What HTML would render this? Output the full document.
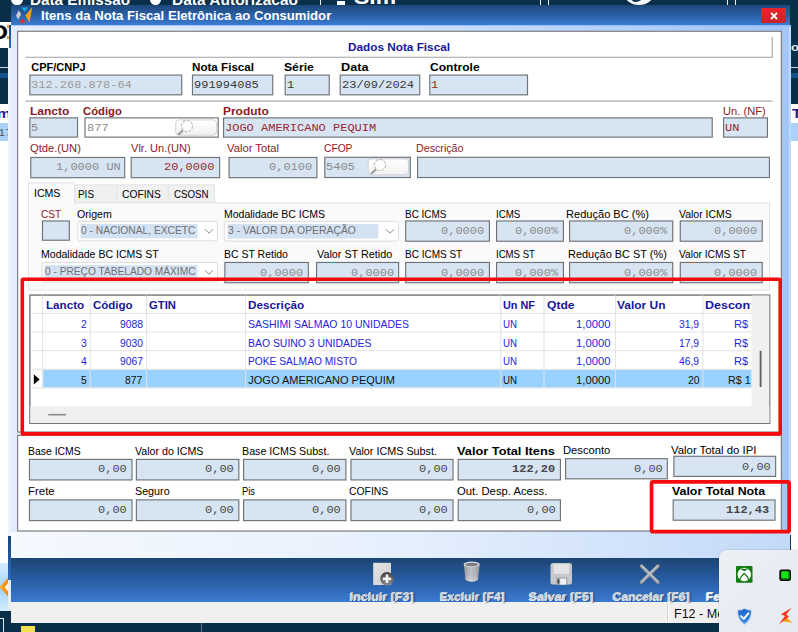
<!DOCTYPE html>
<html><head><meta charset="utf-8"><title>Itens da Nota Fiscal</title>
<style>
html,body{margin:0;padding:0;}
body{width:798px;height:632px;overflow:hidden;background:#fff;position:relative;font-family:"Liberation Sans",sans-serif;}
#root{position:absolute;left:0;top:0;width:798px;height:632px;overflow:hidden;background:#fff;}
#root div{white-space:pre;}
#root svg{display:block;overflow:visible;}
</style></head><body><div id="root">
<div style="position:absolute;left:0.00px;top:0.00px;width:798.00px;height:8.00px;background:#0a2f4b"></div>
<div style="position:absolute;left:0;top:0;width:798px;height:6px;overflow:hidden">
<div style="position:absolute;left:30.00px;top:-10.45px;font:bold 15px/19px 'Liberation Sans',sans-serif;color:#fff;white-space:pre;transform:scaleX(1.0165);transform-origin:0 0;">Data Emissão</div>
<div style="position:absolute;left:172.00px;top:-10.45px;font:bold 15px/19px 'Liberation Sans',sans-serif;color:#fff;white-space:pre;transform:scaleX(1.0330);transform-origin:0 0;">Data Autorização</div>
<div style="position:absolute;left:354.00px;top:-15.53px;font:bold 21px/25px 'Liberation Sans',sans-serif;color:#fff;white-space:pre;transform:scaleX(1.0905);transform-origin:0 0;">Sim</div>
<div style="position:absolute;left:11.00px;top:-6.50px;width:11.50px;height:11.50px;background:#fff;border-radius:6px"></div>
<div style="position:absolute;left:149.50px;top:-6.50px;width:11.50px;height:11.50px;background:#fff;border-radius:6px"></div>
<div style="position:absolute;left:337.00px;top:1.00px;width:8.00px;height:5.00px;background:#fff"></div>
<div style="position:absolute;left:320.00px;top:0.00px;width:1.00px;height:6.00px;background:#e8eef4"></div>
<div style="position:absolute;left:540.00px;top:0.00px;width:1.00px;height:6.00px;background:#e8eef4"></div>
<div style="position:absolute;left:548.00px;top:0.00px;width:1.00px;height:6.00px;background:#e8eef4"></div>
<div style="position:absolute;left:727.00px;top:0.00px;width:1.00px;height:6.00px;background:#e8eef4"></div>
<div style="position:absolute;left:735.00px;top:0.00px;width:1.00px;height:6.00px;background:#e8eef4"></div>
<div style="position:absolute;left:624.00px;top:-10.00px;width:30.00px;height:14.50px;background:#f4f6f8;border-radius:0 0 15px 15px/0 0 12px 12px"></div>
<div style="position:absolute;left:631.00px;top:-8.00px;width:14.00px;height:9.60px;background:#0a2f4b;border-radius:0 0 8px 6px/0 0 8px 7px;transform:skewX(-18deg)"></div>
</div>
<div style="position:absolute;left:0.00px;top:0.00px;width:11.00px;height:22.00px;background:#0a2f4b"></div>
<div style="position:absolute;left:0.00px;top:22.00px;width:8.50px;height:25.50px;background:#fff"></div>
<div style="position:absolute;left:-10.00px;top:19.47px;font:bold 21px/25px 'Liberation Sans',sans-serif;color:#000;white-space:pre;transform:scaleX(1.1900);transform-origin:0 0;">D</div>
<div style="position:absolute;left:7.00px;top:25.00px;width:1.50px;height:2.50px;background:#f0a040"></div>
<div style="position:absolute;left:7.00px;top:36.00px;width:1.50px;height:3.00px;background:#f0a040"></div>
<div style="position:absolute;left:8.50px;top:25.00px;width:2.50px;height:22.50px;background:linear-gradient(#1d4a7c,#2d6bc0)"></div>
<div style="position:absolute;left:0.00px;top:47.50px;width:8.00px;height:56.30px;background:#0a2f4b"></div>
<div style="position:absolute;left:0.00px;top:67.00px;width:8.00px;height:1.00px;background:#c8d4e0"></div>
<div style="position:absolute;left:0.00px;top:73.00px;width:8.00px;height:4.50px;background:#15538f"></div>
<div style="position:absolute;left:0.00px;top:103.80px;width:8.00px;height:459.20px;background:#fff"></div>
<div style="position:absolute;left:-3.50px;top:105.24px;font:bold 13px/17px 'Liberation Sans',sans-serif;color:#2a1a9a;white-space:pre;transform:scaleX(1.1900);transform-origin:0 0;">m</div>
<div style="position:absolute;left:0.00px;top:123.00px;width:8.00px;height:17.70px;background:#a9d3fb"></div>
<div style="position:absolute;left:-2.50px;top:125.82px;font:11px/15px 'Liberation Mono',monospace;color:#555;white-space:pre;transform:scaleX(1.0900);transform-origin:0 0;">17</div>
<div style="position:absolute;left:0.00px;top:562.60px;width:8.30px;height:48.00px;background:linear-gradient(#d4ecff,#a6d5fb 55%,#d3ecfe)"></div>
<svg style="position:absolute;left:0;top:576px" width="9" height="22" viewBox="0 576 9 22"><defs><linearGradient id="go" x1="0" y1="0" x2="1" y2="0"><stop offset="0" stop-color="#ffab1f"/><stop offset="1" stop-color="#f7861a"/></linearGradient></defs><path d="M-0.5 587.2 L8.3 577.4 L8.3 596.8 Z" fill="url(#go)"/><path d="M4.8 587.2 L8.4 582.4 L8.4 592 Z" fill="#fdf6ea"/></svg>
<div style="position:absolute;left:0.00px;top:610.50px;width:11.00px;height:22.00px;background:#0a2f4b"></div>
<div style="position:absolute;left:8.00px;top:47.50px;width:3.00px;height:490.00px;background:#eef4fd"></div>
<div style="position:absolute;left:8.30px;top:536.00px;width:2.70px;height:44.00px;background:linear-gradient(#1b4679,#2c68bb)"></div>
<div style="position:absolute;left:8.30px;top:580.00px;width:2.70px;height:30.50px;background:#e9eef5"></div>
<div style="position:absolute;left:790.00px;top:0.00px;width:8.00px;height:104.00px;background:#0a2f4b"></div>
<div style="position:absolute;left:791.30px;top:39.94px;font:bold 11px/15px 'Liberation Sans',sans-serif;color:#dfe6ee;white-space:pre;transform:scaleX(1.1900);transform-origin:0 0;">o</div>
<div style="position:absolute;left:791.00px;top:67.00px;width:7.00px;height:1.00px;background:#c8d4e0"></div>
<div style="position:absolute;left:791.00px;top:73.00px;width:7.00px;height:4.50px;background:#15538f"></div>
<div style="position:absolute;left:791.00px;top:104.00px;width:7.00px;height:19.00px;background:#fff"></div>
<div style="position:absolute;left:792.00px;top:105.24px;font:bold 13px/17px 'Liberation Sans',sans-serif;color:#1a1a8a;white-space:pre;transform:scaleX(1.1900);transform-origin:0 0;">T</div>
<div style="position:absolute;left:791.00px;top:123.00px;width:7.00px;height:18.00px;background:#a9d3fb"></div>
<div style="position:absolute;left:791.00px;top:141.00px;width:7.00px;height:420.00px;background:#fff"></div>
<div style="position:absolute;left:0.00px;top:622.00px;width:798.00px;height:10.00px;background:#0a2f4b"></div>
<div style="position:absolute;left:21.00px;top:626.00px;width:14.00px;height:8.00px;background:#f5e050"></div>
<div style="position:absolute;left:0.00px;top:618.00px;width:4.00px;height:1.00px;background:#dfe6ee"></div>
<div style="position:absolute;left:3.00px;top:618.00px;width:1.00px;height:14.00px;background:#dfe6ee"></div>
<div style="position:absolute;left:201.00px;top:622.50px;width:1.00px;height:10.00px;background:#5f7388"></div>
<div style="position:absolute;left:11.00px;top:5.10px;width:779.40px;height:20.20px;background:linear-gradient(#1d4879,#2b61a9 55%,#3b7cd5)"></div>
<div style="position:absolute;left:11.00px;top:25.20px;width:780.00px;height:533.00px;background:linear-gradient(90deg,#e2ecfc,#cde0fb 50%,#9fc4f8)"></div>
<div style="position:absolute;left:11.00px;top:25.20px;width:780.00px;height:1.00px;background:linear-gradient(90deg,#a9c9f6,#8fb8f2)"></div>
<div style="position:absolute;left:782.00px;top:27.00px;width:9.00px;height:505.00px;background:linear-gradient(90deg,#a2c6f8 0,#a2c6f8 70%,#c2d9fa 84%)"></div>
<div style="position:absolute;left:11.00px;top:531.50px;width:780.00px;height:26.50px;background:linear-gradient(90deg,#f6f9fe,#e6f0fd 50%,#c3d9f8)"></div>
<svg style="position:absolute;left:14px;top:6px" width="22" height="19" viewBox="14 6 22 19"><path d="M16 15.5 L18.8 10.2 L21.2 14.2 L18 19.6 Z" fill="#c9cdd3"/><path d="M21.4 7.6 L28.2 7.6 L24.8 11.8 Z" fill="#19a8e8"/><path d="M19.2 22.8 L25.6 22.8 L22.4 18.2 Z" fill="#ee2a22"/><path d="M32.3 7 L25.3 15.6 L29.5 22.6 Z" fill="#f2a01c"/></svg>
<div style="position:absolute;left:40.60px;top:7.58px;font:bold 12.6px/16.6px 'Liberation Sans',sans-serif;color:#fff;white-space:pre;transform:scaleX(1.0421);transform-origin:0 0;">Itens da Nota Fiscal Eletrônica ao Consumidor</div>
<div style="position:absolute;left:760.90px;top:8.00px;width:24.90px;height:15.40px;background:linear-gradient(#ea2329,#d9242a 50%,#c4252b);"></div>
<svg style="position:absolute;left:768px;top:11px" width="12" height="10" viewBox="768 11 12 10"><path d="M771 12.9 L777 19 M777 12.9 L771 19" stroke="#fff" stroke-width="2" fill="none"/></svg>
<svg style="position:absolute;left:16px;top:29px;" width="767" height="405" viewBox="16 29 767 405"><rect x="17.60" y="31.30" width="763.80" height="400.70" rx="0" fill="#fff" stroke="#828282" stroke-width="1.2" /></svg>
<svg style="position:absolute;left:16px;top:433px;" width="767" height="100" viewBox="16 433 767 100"><rect x="17.60" y="435.30" width="763.80" height="95.70" rx="0" fill="#fff" stroke="#828282" stroke-width="1.2" /></svg>
<svg style="position:absolute;left:24px;top:55px;" width="750" height="5" viewBox="24 55 750 5"><line x1="25.50" y1="57.20" x2="772.50" y2="57.20" stroke="#a2a2a2" stroke-width="1.1"/></svg>
<svg style="position:absolute;left:770px;top:36px;" width="5" height="23" viewBox="770 36 5 23"><line x1="772.20" y1="37.00" x2="772.20" y2="57.50" stroke="#a2a2a2" stroke-width="1.1"/></svg>
<div style="position:absolute;left:348.10px;top:39.94px;font:bold 11px/15px 'Liberation Sans',sans-serif;color:#17179a;white-space:pre;transform:scaleX(1.0697);transform-origin:0 0;">Dados Nota Fiscal</div>
<div style="position:absolute;left:31.30px;top:59.94px;font:bold 11px/15px 'Liberation Sans',sans-serif;color:#000;white-space:pre;">CPF/CNPJ</div>
<div style="position:absolute;left:192.30px;top:59.94px;font:bold 11px/15px 'Liberation Sans',sans-serif;color:#000;white-space:pre;transform:scaleX(1.0565);transform-origin:0 0;">Nota Fiscal</div>
<div style="position:absolute;left:284.30px;top:59.94px;font:bold 11px/15px 'Liberation Sans',sans-serif;color:#000;white-space:pre;transform:scaleX(1.1074);transform-origin:0 0;">Série</div>
<div style="position:absolute;left:340.60px;top:59.94px;font:bold 11px/15px 'Liberation Sans',sans-serif;color:#000;white-space:pre;transform:scaleX(1.1534);transform-origin:0 0;">Data</div>
<div style="position:absolute;left:430.10px;top:59.94px;font:bold 11px/15px 'Liberation Sans',sans-serif;color:#000;white-space:pre;transform:scaleX(1.0969);transform-origin:0 0;">Controle</div>
<svg style="position:absolute;left:28px;top:73px;" width="156" height="24" viewBox="28 73 156 24"><rect x="29.88" y="75.08" width="151.85" height="19.75" rx="0" fill="#d7e4f2" stroke="#6f7378" stroke-width="1.15" /></svg>
<div style="position:absolute;left:31.40px;top:77.82px;font:11px/15px 'Liberation Mono',monospace;color:#9a9a9a;white-space:pre;transform:scaleX(1.0909);transform-origin:0 0;">312.268.878-64</div>
<svg style="position:absolute;left:190px;top:73px;" width="85" height="24" viewBox="190 73 85 24"><rect x="192.47" y="75.08" width="80.25" height="19.75" rx="0" fill="#d7e4f2" stroke="#6f7378" stroke-width="1.15" /></svg>
<div style="position:absolute;left:193.80px;top:77.82px;font:11px/15px 'Liberation Mono',monospace;color:#383838;white-space:pre;transform:scaleX(1.0909);transform-origin:0 0;">991994085</div>
<svg style="position:absolute;left:283px;top:73px;" width="48" height="24" viewBox="283 73 48 24"><rect x="285.18" y="75.08" width="44.05" height="19.75" rx="0" fill="#d7e4f2" stroke="#6f7378" stroke-width="1.15" /></svg>
<div style="position:absolute;left:286.60px;top:77.82px;font:11px/15px 'Liberation Mono',monospace;color:#383838;white-space:pre;transform:scaleX(1.0909);transform-origin:0 0;">1</div>
<svg style="position:absolute;left:338px;top:73px;" width="84" height="24" viewBox="338 73 84 24"><rect x="340.18" y="75.08" width="79.55" height="19.75" rx="0" fill="#d7e4f2" stroke="#6f7378" stroke-width="1.15" /></svg>
<div style="position:absolute;left:341.80px;top:77.82px;font:11px/15px 'Liberation Mono',monospace;color:#383838;white-space:pre;transform:scaleX(1.0909);transform-origin:0 0;">23/09/2024</div>
<svg style="position:absolute;left:428px;top:73px;" width="102" height="24" viewBox="428 73 102 24"><rect x="429.77" y="75.08" width="97.75" height="19.75" rx="0" fill="#d7e4f2" stroke="#6f7378" stroke-width="1.15" /></svg>
<div style="position:absolute;left:431.30px;top:77.82px;font:11px/15px 'Liberation Mono',monospace;color:#982834;white-space:pre;transform:scaleX(1.0909);transform-origin:0 0;">1</div>
<svg style="position:absolute;left:24px;top:98px;" width="750" height="6" viewBox="24 98 750 6"><line x1="25.50" y1="101.10" x2="772.50" y2="101.10" stroke="#a8a8a8" stroke-width="1.2"/></svg>
<div style="position:absolute;left:29.90px;top:103.94px;font:bold 11px/15px 'Liberation Sans',sans-serif;color:#8a1a24;white-space:pre;transform:scaleX(1.0927);transform-origin:0 0;">Lancto</div>
<div style="position:absolute;left:83.30px;top:103.94px;font:bold 11px/15px 'Liberation Sans',sans-serif;color:#8a1a24;white-space:pre;transform:scaleX(1.0244);transform-origin:0 0;">Código</div>
<div style="position:absolute;left:223.30px;top:103.94px;font:bold 11px/15px 'Liberation Sans',sans-serif;color:#8a1a24;white-space:pre;transform:scaleX(1.0864);transform-origin:0 0;">Produto</div>
<div style="position:absolute;left:722.90px;top:103.94px;font:11px/15px 'Liberation Sans',sans-serif;color:#8a1a24;white-space:pre;transform:scaleX(1.0127);transform-origin:0 0;">Un. (NF)</div>
<svg style="position:absolute;left:28px;top:116px;" width="52" height="23" viewBox="28 116 52 23"><rect x="29.88" y="117.88" width="47.65" height="19.25" rx="0" fill="#d7e4f2" stroke="#6f7378" stroke-width="1.15" /></svg>
<div style="position:absolute;left:31.40px;top:120.82px;font:11px/15px 'Liberation Mono',monospace;color:#8c8c8c;white-space:pre;transform:scaleX(1.0909);transform-origin:0 0;">5</div>
<svg style="position:absolute;left:83px;top:116px;" width="137" height="23" viewBox="83 116 137 23"><rect x="84.98" y="117.88" width="133.25" height="19.25" rx="0" fill="#fff" stroke="#6f7378" stroke-width="1.15" /></svg>
<div style="position:absolute;left:86.50px;top:120.82px;font:11px/15px 'Liberation Mono',monospace;color:#8c8c8c;white-space:pre;transform:scaleX(1.0909);transform-origin:0 0;">877</div>
<svg style="position:absolute;left:174px;top:118px;" width="44" height="19" viewBox="174 118 44 19"><defs><linearGradient id="gb175" x1="0" y1="0" x2="0" y2="1"><stop offset="0" stop-color="#fff"/><stop offset="1" stop-color="#f1f1f1"/></linearGradient></defs><rect x="175.70" y="119.90" width="40.80" height="15.30" rx="3.2" fill="url(#gb175)" stroke="#d4d4d4" stroke-width="1"/></svg>
<svg style="position:absolute;left:175.20px;top:118.00px" width="24" height="20" viewBox="-12 -8 24 20"><circle cx="0" cy="0" r="5.6" fill="#fdfdfd" stroke="#bdbdbd" stroke-width="1.1" stroke-dasharray="3 1.2"/><line x1="-4" y1="4.4" x2="-9" y2="8.8" stroke="#a2a2a2" stroke-width="2.4"/></svg>
<svg style="position:absolute;left:222px;top:116px;" width="492" height="23" viewBox="222 116 492 23"><rect x="223.57" y="117.88" width="488.65" height="19.25" rx="0" fill="#d7e4f2" stroke="#6f7378" stroke-width="1.15" /></svg>
<div style="position:absolute;left:224.50px;top:120.82px;font:11px/15px 'Liberation Mono',monospace;color:#982834;white-space:pre;transform:scaleX(1.0909);transform-origin:0 0;">JOGO AMERICANO PEQUIM</div>
<svg style="position:absolute;left:722px;top:116px;" width="47" height="23" viewBox="722 116 47 23"><rect x="723.58" y="117.88" width="43.85" height="19.25" rx="0" fill="#d7e4f2" stroke="#6f7378" stroke-width="1.15" /></svg>
<div style="position:absolute;left:724.80px;top:120.82px;font:11px/15px 'Liberation Mono',monospace;color:#982834;white-space:pre;transform:scaleX(1.0909);transform-origin:0 0;">UN</div>
<div style="position:absolute;left:29.90px;top:140.94px;font:11px/15px 'Liberation Sans',sans-serif;color:#8a1a24;white-space:pre;transform:scaleX(1.0156);transform-origin:0 0;">Qtde.(UN)</div>
<div style="position:absolute;left:131.30px;top:140.94px;font:11px/15px 'Liberation Sans',sans-serif;color:#8a1a24;white-space:pre;transform:scaleX(1.0071);transform-origin:0 0;">Vlr. Un.(UN)</div>
<div style="position:absolute;left:227.30px;top:140.94px;font:11px/15px 'Liberation Sans',sans-serif;color:#8a1a24;white-space:pre;transform:scaleX(1.0205);transform-origin:0 0;">Valor Total</div>
<div style="position:absolute;left:323.90px;top:140.94px;font:11px/15px 'Liberation Sans',sans-serif;color:#8a1a24;white-space:pre;transform:scaleX(0.9294);transform-origin:0 0;">CFOP</div>
<div style="position:absolute;left:415.80px;top:140.94px;font:11px/15px 'Liberation Sans',sans-serif;color:#8a1a24;white-space:pre;transform:scaleX(0.9713);transform-origin:0 0;">Descrição</div>
<svg style="position:absolute;left:29px;top:155px;" width="98" height="25" viewBox="29 155 98 25"><rect x="30.77" y="157.47" width="93.95" height="20.25" rx="0" fill="#d7e4f2" stroke="#6f7378" stroke-width="1.15" /></svg>
<div style="position:absolute;left:55.99px;top:159.82px;font:11px/15px 'Liberation Mono',monospace;color:#8c8c8c;white-space:pre;transform:scaleX(1.0909);transform-origin:0 0;">1,0000 UN</div>
<svg style="position:absolute;left:129px;top:155px;" width="93" height="25" viewBox="129 155 93 25"><rect x="131.17" y="157.47" width="88.45" height="20.25" rx="0" fill="#d7e4f2" stroke="#6f7378" stroke-width="1.15" /></svg>
<div style="position:absolute;left:164.09px;top:159.82px;font:11px/15px 'Liberation Mono',monospace;color:#982834;white-space:pre;transform:scaleX(1.0909);transform-origin:0 0;">20,0000</div>
<svg style="position:absolute;left:227px;top:155px;" width="92" height="25" viewBox="227 155 92 25"><rect x="229.07" y="157.47" width="87.85" height="20.25" rx="0" fill="#d7e4f2" stroke="#6f7378" stroke-width="1.15" /></svg>
<div style="position:absolute;left:268.89px;top:159.82px;font:11px/15px 'Liberation Mono',monospace;color:#8c8c8c;white-space:pre;transform:scaleX(1.0909);transform-origin:0 0;">0,0100</div>
<svg style="position:absolute;left:323px;top:155px;" width="89" height="25" viewBox="323 155 89 25"><rect x="324.77" y="157.28" width="85.55" height="20.25" rx="0" fill="#d7e4f2" stroke="#6f7378" stroke-width="1.15" /></svg>
<div style="position:absolute;left:325.80px;top:159.82px;font:11px/15px 'Liberation Mono',monospace;color:#8c8c8c;white-space:pre;transform:scaleX(1.0909);transform-origin:0 0;">5405</div>
<svg style="position:absolute;left:366px;top:157px;" width="44" height="20" viewBox="366 157 44 20"><defs><linearGradient id="gb367" x1="0" y1="0" x2="0" y2="1"><stop offset="0" stop-color="#fff"/><stop offset="1" stop-color="#f1f1f1"/></linearGradient></defs><rect x="368.20" y="158.90" width="40.30" height="15.90" rx="3.2" fill="url(#gb367)" stroke="#d4d4d4" stroke-width="1"/></svg>
<svg style="position:absolute;left:367.70px;top:157.00px" width="24" height="20" viewBox="-12 -8 24 20"><circle cx="0" cy="0" r="5.6" fill="#fdfdfd" stroke="#bdbdbd" stroke-width="1.1" stroke-dasharray="3 1.2"/><line x1="-4" y1="4.4" x2="-9" y2="8.8" stroke="#a2a2a2" stroke-width="2.4"/></svg>
<svg style="position:absolute;left:416px;top:155px;" width="355" height="25" viewBox="416 155 355 25"><rect x="417.57" y="157.28" width="351.85" height="20.25" rx="0" fill="#d7e4f2" stroke="#6f7378" stroke-width="1.15" /></svg>
<svg style="position:absolute;left:27px;top:201px;" width="744" height="91" viewBox="27 201 744 91"><rect x="28.50" y="202.80" width="741.00" height="87.20" rx="0" fill="#fafafa" stroke="#e4e4e4" stroke-width="1" /></svg>
<svg style="position:absolute;left:73px;top:183px;" width="45" height="21" viewBox="73 183 45 21"><rect x="75.20" y="184.80" width="41.10" height="17.70" rx="0" fill="#f0f0f0" stroke="#e4e4e4" stroke-width="1" /></svg>
<svg style="position:absolute;left:115px;top:183px;" width="55" height="21" viewBox="115 183 55 21"><rect x="116.80" y="184.80" width="51.40" height="17.70" rx="0" fill="#f0f0f0" stroke="#e4e4e4" stroke-width="1" /></svg>
<svg style="position:absolute;left:167px;top:183px;" width="49" height="21" viewBox="167 183 49 21"><rect x="168.70" y="184.80" width="45.80" height="17.70" rx="0" fill="#f0f0f0" stroke="#e4e4e4" stroke-width="1" /></svg>
<svg style="position:absolute;left:27px;top:181px;" width="49" height="25" viewBox="27 181 49 25"><rect x="28.50" y="182.80" width="46.00" height="21.70" rx="0" fill="#fafafa" stroke="#e4e4e4" stroke-width="1" /></svg>
<div style="position:absolute;left:29.00px;top:202.00px;width:45.20px;height:4.00px;background:#fafafa"></div>
<div style="position:absolute;left:34.30px;top:185.94px;font:11px/15px 'Liberation Sans',sans-serif;color:#000;white-space:pre;transform:scaleX(0.9600);transform-origin:0 0;">ICMS</div>
<div style="position:absolute;left:78.30px;top:186.94px;font:11px/15px 'Liberation Sans',sans-serif;color:#000;white-space:pre;transform:scaleX(0.9024);transform-origin:0 0;">PIS</div>
<div style="position:absolute;left:122.10px;top:186.94px;font:11px/15px 'Liberation Sans',sans-serif;color:#000;white-space:pre;transform:scaleX(0.9337);transform-origin:0 0;">COFINS</div>
<div style="position:absolute;left:174.30px;top:186.94px;font:11px/15px 'Liberation Sans',sans-serif;color:#000;white-space:pre;transform:scaleX(0.8819);transform-origin:0 0;">CSOSN</div>
<div style="position:absolute;left:40.60px;top:206.94px;font:11px/15px 'Liberation Sans',sans-serif;color:#8a1a24;white-space:pre;transform:scaleX(0.9136);transform-origin:0 0;">CST</div>
<div style="position:absolute;left:77.30px;top:206.94px;font:11px/15px 'Liberation Sans',sans-serif;color:#000;white-space:pre;transform:scaleX(0.9650);transform-origin:0 0;">Origem</div>
<div style="position:absolute;left:223.60px;top:206.94px;font:11px/15px 'Liberation Sans',sans-serif;color:#000;white-space:pre;transform:scaleX(0.9549);transform-origin:0 0;">Modalidade BC ICMS</div>
<div style="position:absolute;left:404.80px;top:206.94px;font:11px/15px 'Liberation Sans',sans-serif;color:#000;white-space:pre;transform:scaleX(0.9054);transform-origin:0 0;">BC ICMS</div>
<div style="position:absolute;left:495.80px;top:206.94px;font:11px/15px 'Liberation Sans',sans-serif;color:#000;white-space:pre;transform:scaleX(0.8836);transform-origin:0 0;">ICMS</div>
<div style="position:absolute;left:566.00px;top:206.94px;font:11px/15px 'Liberation Sans',sans-serif;color:#000;white-space:pre;transform:scaleX(1.0057);transform-origin:0 0;">Redução BC (%)</div>
<div style="position:absolute;left:679.00px;top:206.94px;font:11px/15px 'Liberation Sans',sans-serif;color:#000;white-space:pre;transform:scaleX(0.9509);transform-origin:0 0;">Valor ICMS</div>
<svg style="position:absolute;left:40px;top:219px;" width="31" height="23" viewBox="40 219 31 23"><rect x="42.48" y="220.97" width="26.85" height="19.25" rx="0" fill="#d7e4f2" stroke="#6f7378" stroke-width="1.15" /></svg>
<svg style="position:absolute;left:76px;top:219px;" width="143" height="24" viewBox="76 219 143 24"><rect x="78.00" y="221.40" width="139.50" height="19.40" rx="2" fill="#fff" stroke="#dcdcdc" stroke-width="1" /></svg>
<svg style="position:absolute;left:79px;top:222px;" width="120" height="18" viewBox="79 222 120 18"><rect x="80.50" y="223.90" width="117.00" height="14.40" rx="0" fill="#d3e2f3" /></svg>
<div style="position:absolute;left:81.30px;top:222.94px;font:11px/15px 'Liberation Sans',sans-serif;color:#6f6f6f;white-space:pre;transform:scaleX(0.9320);transform-origin:0 0;">0 - NACIONAL, EXCETC</div>
<svg style="position:absolute;left:204.00px;top:227.90px" width="10" height="7" viewBox="0 0 10 7"><path d="M1 1.2 L5 5.2 L9 1.2" stroke="#8a8a8a" stroke-width="1" fill="none"/></svg>
<svg style="position:absolute;left:222px;top:219px;" width="178" height="24" viewBox="222 219 178 24"><rect x="224.30" y="221.40" width="174.20" height="19.70" rx="2" fill="#fff" stroke="#dcdcdc" stroke-width="1" /></svg>
<svg style="position:absolute;left:226px;top:222px;" width="154" height="18" viewBox="226 222 154 18"><rect x="227.60" y="223.90" width="150.80" height="14.70" rx="0" fill="#d3e2f3" /></svg>
<div style="position:absolute;left:228.40px;top:222.94px;font:11px/15px 'Liberation Sans',sans-serif;color:#6f6f6f;white-space:pre;transform:scaleX(0.9439);transform-origin:0 0;">3 - VALOR DA OPERAÇÃO</div>
<svg style="position:absolute;left:385.00px;top:227.90px" width="10" height="7" viewBox="0 0 10 7"><path d="M1 1.2 L5 5.2 L9 1.2" stroke="#8a8a8a" stroke-width="1" fill="none"/></svg>
<svg style="position:absolute;left:404px;top:219px;" width="87" height="24" viewBox="404 219 87 24"><rect x="405.68" y="220.97" width="83.75" height="20.25" rx="0" fill="#d7e4f2" stroke="#6f7378" stroke-width="1.15" /></svg>
<div style="position:absolute;left:441.29px;top:223.82px;font:11px/15px 'Liberation Mono',monospace;color:#8c8c8c;white-space:pre;transform:scaleX(1.0909);transform-origin:0 0;">0,0000</div>
<svg style="position:absolute;left:495px;top:219px;" width="70" height="24" viewBox="495 219 70 24"><rect x="496.57" y="220.97" width="66.85" height="20.25" rx="0" fill="#d7e4f2" stroke="#6f7378" stroke-width="1.15" /></svg>
<div style="position:absolute;left:514.69px;top:223.82px;font:11px/15px 'Liberation Mono',monospace;color:#8c8c8c;white-space:pre;transform:scaleX(1.0909);transform-origin:0 0;">0,000%</div>
<svg style="position:absolute;left:568px;top:219px;" width="107" height="24" viewBox="568 219 107 24"><rect x="569.58" y="220.97" width="103.15" height="20.25" rx="0" fill="#d7e4f2" stroke="#6f7378" stroke-width="1.15" /></svg>
<div style="position:absolute;left:624.29px;top:223.82px;font:11px/15px 'Liberation Mono',monospace;color:#8c8c8c;white-space:pre;transform:scaleX(1.0909);transform-origin:0 0;">0,000%</div>
<svg style="position:absolute;left:678px;top:219px;" width="86" height="24" viewBox="678 219 86 24"><rect x="680.28" y="220.97" width="81.95" height="20.25" rx="0" fill="#d7e4f2" stroke="#6f7378" stroke-width="1.15" /></svg>
<div style="position:absolute;left:714.29px;top:223.82px;font:11px/15px 'Liberation Mono',monospace;color:#8c8c8c;white-space:pre;transform:scaleX(1.0909);transform-origin:0 0;">0,0000</div>
<div style="position:absolute;left:40.60px;top:246.94px;font:11px/15px 'Liberation Sans',sans-serif;color:#000;white-space:pre;transform:scaleX(0.9578);transform-origin:0 0;">Modalidade BC ICMS ST</div>
<div style="position:absolute;left:223.60px;top:246.94px;font:11px/15px 'Liberation Sans',sans-serif;color:#000;white-space:pre;transform:scaleX(0.9531);transform-origin:0 0;">BC ST Retido</div>
<div style="position:absolute;left:317.10px;top:246.94px;font:11px/15px 'Liberation Sans',sans-serif;color:#000;white-space:pre;transform:scaleX(0.9813);transform-origin:0 0;">Valor ST Retido</div>
<div style="position:absolute;left:404.80px;top:246.94px;font:11px/15px 'Liberation Sans',sans-serif;color:#000;white-space:pre;transform:scaleX(0.9087);transform-origin:0 0;">BC ICMS ST</div>
<div style="position:absolute;left:495.80px;top:246.94px;font:11px/15px 'Liberation Sans',sans-serif;color:#000;white-space:pre;transform:scaleX(0.8719);transform-origin:0 0;">ICMS ST</div>
<div style="position:absolute;left:567.70px;top:246.94px;font:11px/15px 'Liberation Sans',sans-serif;color:#000;white-space:pre;transform:scaleX(0.9935);transform-origin:0 0;">Redução BC ST (%)</div>
<div style="position:absolute;left:679.00px;top:246.94px;font:11px/15px 'Liberation Sans',sans-serif;color:#000;white-space:pre;transform:scaleX(0.9237);transform-origin:0 0;">Valor ICMS ST</div>
<svg style="position:absolute;left:40px;top:261px;" width="179" height="23" viewBox="40 261 179 23"><rect x="42.00" y="262.60" width="175.50" height="19.40" rx="2" fill="#fff" stroke="#dcdcdc" stroke-width="1" /></svg>
<svg style="position:absolute;left:43px;top:264px;" width="156" height="17" viewBox="43 264 156 17"><rect x="44.50" y="265.10" width="153.00" height="14.40" rx="0" fill="#d3e2f3" /></svg>
<div style="position:absolute;left:45.30px;top:263.94px;font:11px/15px 'Liberation Sans',sans-serif;color:#6f6f6f;white-space:pre;transform:scaleX(0.9245);transform-origin:0 0;">0 - PREÇO TABELADO MÁXIMC</div>
<svg style="position:absolute;left:204.00px;top:269.10px" width="10" height="7" viewBox="0 0 10 7"><path d="M1 1.2 L5 5.2 L9 1.2" stroke="#8a8a8a" stroke-width="1" fill="none"/></svg>
<svg style="position:absolute;left:223px;top:260px;" width="87" height="25" viewBox="223 260 87 25"><rect x="224.88" y="262.47" width="83.45" height="20.25" rx="0" fill="#d7e4f2" stroke="#6f7378" stroke-width="1.15" /></svg>
<div style="position:absolute;left:260.09px;top:265.82px;font:11px/15px 'Liberation Mono',monospace;color:#8c8c8c;white-space:pre;transform:scaleX(1.0909);transform-origin:0 0;">0,0000</div>
<svg style="position:absolute;left:315px;top:260px;" width="86" height="25" viewBox="315 260 86 25"><rect x="316.57" y="262.47" width="82.05" height="20.25" rx="0" fill="#d7e4f2" stroke="#6f7378" stroke-width="1.15" /></svg>
<div style="position:absolute;left:350.89px;top:265.82px;font:11px/15px 'Liberation Mono',monospace;color:#8c8c8c;white-space:pre;transform:scaleX(1.0909);transform-origin:0 0;">0,0000</div>
<svg style="position:absolute;left:404px;top:260px;" width="87" height="25" viewBox="404 260 87 25"><rect x="405.68" y="262.47" width="83.75" height="20.25" rx="0" fill="#d7e4f2" stroke="#6f7378" stroke-width="1.15" /></svg>
<div style="position:absolute;left:441.29px;top:265.82px;font:11px/15px 'Liberation Mono',monospace;color:#8c8c8c;white-space:pre;transform:scaleX(1.0909);transform-origin:0 0;">0,0000</div>
<svg style="position:absolute;left:495px;top:260px;" width="70" height="25" viewBox="495 260 70 25"><rect x="496.57" y="262.47" width="66.85" height="20.25" rx="0" fill="#d7e4f2" stroke="#6f7378" stroke-width="1.15" /></svg>
<div style="position:absolute;left:514.69px;top:265.82px;font:11px/15px 'Liberation Mono',monospace;color:#8c8c8c;white-space:pre;transform:scaleX(1.0909);transform-origin:0 0;">0,000%</div>
<svg style="position:absolute;left:568px;top:260px;" width="107" height="25" viewBox="568 260 107 25"><rect x="569.58" y="262.47" width="103.15" height="20.25" rx="0" fill="#d7e4f2" stroke="#6f7378" stroke-width="1.15" /></svg>
<div style="position:absolute;left:624.29px;top:265.82px;font:11px/15px 'Liberation Mono',monospace;color:#8c8c8c;white-space:pre;transform:scaleX(1.0909);transform-origin:0 0;">0,000%</div>
<svg style="position:absolute;left:678px;top:260px;" width="86" height="25" viewBox="678 260 86 25"><rect x="680.28" y="262.47" width="81.95" height="20.25" rx="0" fill="#d7e4f2" stroke="#6f7378" stroke-width="1.15" /></svg>
<div style="position:absolute;left:714.29px;top:265.82px;font:11px/15px 'Liberation Mono',monospace;color:#8c8c8c;white-space:pre;transform:scaleX(1.0909);transform-origin:0 0;">0,0000</div>
<svg style="position:absolute;left:28px;top:293px;" width="744" height="132" viewBox="28 293 744 132"><rect x="29.90" y="295.10" width="739.80" height="128.20" rx="0" fill="#fff" stroke="#74777c" stroke-width="1.4" /></svg>
<svg style="position:absolute;left:42px;top:369px;" width="711" height="20" viewBox="42 369 711 20"><rect x="43.20" y="370.00" width="708.40" height="17.60" rx="0" fill="#99d1ff" /></svg>
<svg style="position:absolute;left:29px;top:405px;" width="742" height="19" viewBox="29 405 742 19"><rect x="30.30" y="406.20" width="739.00" height="16.70" rx="0" fill="#f0f0f0" /></svg>
<svg style="position:absolute;left:750px;top:294px;" width="21" height="130" viewBox="750 294 21 130"><rect x="751.60" y="295.50" width="17.70" height="127.40" rx="0" fill="#f0f0f0" /></svg>
<svg style="position:absolute;left:47px;top:412px;" width="20" height="6" viewBox="47 412 20 6"><line x1="48.20" y1="414.70" x2="66.00" y2="414.70" stroke="#8a8a8a" stroke-width="1.6"/></svg>
<svg style="position:absolute;left:757px;top:349px;" width="7" height="39" viewBox="757 349 7 39"><line x1="760.60" y1="350.80" x2="760.60" y2="387.00" stroke="#5f5f5f" stroke-width="1.8"/></svg>
<svg style="position:absolute;left:29px;top:311px;" width="724" height="5" viewBox="29 311 724 5"><line x1="30.20" y1="313.40" x2="751.60" y2="313.40" stroke="#e2e2e2" stroke-width="1"/></svg>
<svg style="position:absolute;left:29px;top:330px;" width="724" height="4" viewBox="29 330 724 4"><line x1="30.20" y1="332.00" x2="751.60" y2="332.00" stroke="#e2e2e2" stroke-width="1"/></svg>
<svg style="position:absolute;left:29px;top:348px;" width="724" height="5" viewBox="29 348 724 5"><line x1="30.20" y1="350.70" x2="751.60" y2="350.70" stroke="#e2e2e2" stroke-width="1"/></svg>
<svg style="position:absolute;left:29px;top:367px;" width="724" height="5" viewBox="29 367 724 5"><line x1="30.20" y1="369.40" x2="751.60" y2="369.40" stroke="#e2e2e2" stroke-width="1"/></svg>
<svg style="position:absolute;left:29px;top:386px;" width="724" height="4" viewBox="29 386 724 4"><line x1="30.20" y1="388.00" x2="751.60" y2="388.00" stroke="#e2e2e2" stroke-width="1"/></svg>
<svg style="position:absolute;left:40px;top:294px;" width="5" height="95" viewBox="40 294 5 95"><line x1="42.60" y1="295.40" x2="42.60" y2="388.00" stroke="#e2e2e2" stroke-width="1"/></svg>
<svg style="position:absolute;left:88px;top:294px;" width="5" height="95" viewBox="88 294 5 95"><line x1="90.20" y1="295.40" x2="90.20" y2="388.00" stroke="#e2e2e2" stroke-width="1"/></svg>
<svg style="position:absolute;left:144px;top:294px;" width="5" height="95" viewBox="144 294 5 95"><line x1="146.60" y1="295.40" x2="146.60" y2="388.00" stroke="#e2e2e2" stroke-width="1"/></svg>
<svg style="position:absolute;left:243px;top:294px;" width="5" height="95" viewBox="243 294 5 95"><line x1="245.60" y1="295.40" x2="245.60" y2="388.00" stroke="#e2e2e2" stroke-width="1"/></svg>
<svg style="position:absolute;left:498px;top:294px;" width="5" height="95" viewBox="498 294 5 95"><line x1="500.80" y1="295.40" x2="500.80" y2="388.00" stroke="#e2e2e2" stroke-width="1"/></svg>
<svg style="position:absolute;left:542px;top:294px;" width="4" height="95" viewBox="542 294 4 95"><line x1="544.00" y1="295.40" x2="544.00" y2="388.00" stroke="#e2e2e2" stroke-width="1"/></svg>
<svg style="position:absolute;left:613px;top:294px;" width="5" height="95" viewBox="613 294 5 95"><line x1="615.60" y1="295.40" x2="615.60" y2="388.00" stroke="#e2e2e2" stroke-width="1"/></svg>
<svg style="position:absolute;left:700px;top:294px;" width="5" height="95" viewBox="700 294 5 95"><line x1="702.90" y1="295.40" x2="702.90" y2="388.00" stroke="#e2e2e2" stroke-width="1"/></svg>
<div style="position:absolute;left:45.60px;top:297.94px;font:bold 11px/15px 'Liberation Sans',sans-serif;color:#17179a;white-space:pre;transform:scaleX(1.0567);transform-origin:0 0;">Lancto</div>
<div style="position:absolute;left:92.50px;top:297.94px;font:bold 11px/15px 'Liberation Sans',sans-serif;color:#17179a;white-space:pre;transform:scaleX(1.0455);transform-origin:0 0;">Código</div>
<div style="position:absolute;left:149.10px;top:297.94px;font:bold 11px/15px 'Liberation Sans',sans-serif;color:#17179a;white-space:pre;transform:scaleX(1.0238);transform-origin:0 0;">GTIN</div>
<div style="position:absolute;left:248.20px;top:297.94px;font:bold 11px/15px 'Liberation Sans',sans-serif;color:#17179a;white-space:pre;transform:scaleX(1.0668);transform-origin:0 0;">Descrição</div>
<div style="position:absolute;left:503.30px;top:297.94px;font:bold 11px/15px 'Liberation Sans',sans-serif;color:#17179a;white-space:pre;transform:scaleX(0.9882);transform-origin:0 0;">Un NF</div>
<div style="position:absolute;left:546.70px;top:297.94px;font:bold 11px/15px 'Liberation Sans',sans-serif;color:#17179a;white-space:pre;transform:scaleX(1.1015);transform-origin:0 0;">Qtde</div>
<div style="position:absolute;left:617.30px;top:297.94px;font:bold 11px/15px 'Liberation Sans',sans-serif;color:#17179a;white-space:pre;transform:scaleX(1.0869);transform-origin:0 0;">Valor Un</div>
<div style="position:absolute;left:703px;top:296px;width:48px;height:17px;overflow:hidden">
<div style="position:absolute;left:2.30px;top:1.94px;font:bold 11px/15px 'Liberation Sans',sans-serif;color:#17179a;white-space:pre;transform:scaleX(1.1358);transform-origin:0 0;">Desconto</div>
</div>
<div style="position:absolute;left:80.85px;top:316.94px;font:11px/15px 'Liberation Sans',sans-serif;color:#2424dc;white-space:pre;transform:scaleX(0.9400);transform-origin:0 0;">2</div>
<div style="position:absolute;left:119.70px;top:316.94px;font:11px/15px 'Liberation Sans',sans-serif;color:#2424dc;white-space:pre;transform:scaleX(0.9400);transform-origin:0 0;">9088</div>
<div style="position:absolute;left:248.30px;top:316.94px;font:11px/15px 'Liberation Sans',sans-serif;color:#2424dc;white-space:pre;transform:scaleX(0.9508);transform-origin:0 0;">SASHIMI SALMAO 10 UNIDADES</div>
<div style="position:absolute;left:503.30px;top:316.94px;font:11px/15px 'Liberation Sans',sans-serif;color:#2424dc;white-space:pre;transform:scaleX(0.8812);transform-origin:0 0;">UN</div>
<div style="position:absolute;left:576.30px;top:316.94px;font:11px/15px 'Liberation Sans',sans-serif;color:#2424dc;white-space:pre;transform:scaleX(1.0225);transform-origin:0 0;">1,0000</div>
<div style="position:absolute;left:678.88px;top:316.94px;font:11px/15px 'Liberation Sans',sans-serif;color:#2424dc;white-space:pre;transform:scaleX(0.9400);transform-origin:0 0;">31,9</div>
<div style="position:absolute;left:733.80px;top:316.94px;font:11px/15px 'Liberation Sans',sans-serif;color:#2424dc;white-space:pre;transform:scaleX(0.9956);transform-origin:0 0;">R$</div>
<div style="position:absolute;left:80.85px;top:335.94px;font:11px/15px 'Liberation Sans',sans-serif;color:#2424dc;white-space:pre;transform:scaleX(0.9400);transform-origin:0 0;">3</div>
<div style="position:absolute;left:119.70px;top:335.94px;font:11px/15px 'Liberation Sans',sans-serif;color:#2424dc;white-space:pre;transform:scaleX(0.9400);transform-origin:0 0;">9030</div>
<div style="position:absolute;left:248.30px;top:335.94px;font:11px/15px 'Liberation Sans',sans-serif;color:#2424dc;white-space:pre;transform:scaleX(0.9478);transform-origin:0 0;">BAO SUINO 3 UNIDADES</div>
<div style="position:absolute;left:503.30px;top:335.94px;font:11px/15px 'Liberation Sans',sans-serif;color:#2424dc;white-space:pre;transform:scaleX(0.8812);transform-origin:0 0;">UN</div>
<div style="position:absolute;left:576.30px;top:335.94px;font:11px/15px 'Liberation Sans',sans-serif;color:#2424dc;white-space:pre;transform:scaleX(1.0225);transform-origin:0 0;">1,0000</div>
<div style="position:absolute;left:678.88px;top:335.94px;font:11px/15px 'Liberation Sans',sans-serif;color:#2424dc;white-space:pre;transform:scaleX(0.9400);transform-origin:0 0;">17,9</div>
<div style="position:absolute;left:733.80px;top:335.94px;font:11px/15px 'Liberation Sans',sans-serif;color:#2424dc;white-space:pre;transform:scaleX(0.9956);transform-origin:0 0;">R$</div>
<div style="position:absolute;left:80.85px;top:353.94px;font:11px/15px 'Liberation Sans',sans-serif;color:#2424dc;white-space:pre;transform:scaleX(0.9400);transform-origin:0 0;">4</div>
<div style="position:absolute;left:119.70px;top:353.94px;font:11px/15px 'Liberation Sans',sans-serif;color:#2424dc;white-space:pre;transform:scaleX(0.9400);transform-origin:0 0;">9067</div>
<div style="position:absolute;left:248.30px;top:353.94px;font:11px/15px 'Liberation Sans',sans-serif;color:#2424dc;white-space:pre;transform:scaleX(0.9303);transform-origin:0 0;">POKE SALMAO MISTO</div>
<div style="position:absolute;left:503.30px;top:353.94px;font:11px/15px 'Liberation Sans',sans-serif;color:#2424dc;white-space:pre;transform:scaleX(0.8812);transform-origin:0 0;">UN</div>
<div style="position:absolute;left:576.30px;top:353.94px;font:11px/15px 'Liberation Sans',sans-serif;color:#2424dc;white-space:pre;transform:scaleX(1.0225);transform-origin:0 0;">1,0000</div>
<div style="position:absolute;left:678.88px;top:353.94px;font:11px/15px 'Liberation Sans',sans-serif;color:#2424dc;white-space:pre;transform:scaleX(0.9400);transform-origin:0 0;">46,9</div>
<div style="position:absolute;left:733.80px;top:353.94px;font:11px/15px 'Liberation Sans',sans-serif;color:#2424dc;white-space:pre;transform:scaleX(0.9956);transform-origin:0 0;">R$</div>
<div style="position:absolute;left:80.85px;top:372.94px;font:11px/15px 'Liberation Sans',sans-serif;color:#111;white-space:pre;transform:scaleX(0.9400);transform-origin:0 0;">5</div>
<div style="position:absolute;left:125.45px;top:372.94px;font:11px/15px 'Liberation Sans',sans-serif;color:#111;white-space:pre;transform:scaleX(0.9400);transform-origin:0 0;">877</div>
<div style="position:absolute;left:248.30px;top:372.94px;font:11px/15px 'Liberation Sans',sans-serif;color:#111;white-space:pre;">JOGO AMERICANO PEQUIM</div>
<div style="position:absolute;left:503.30px;top:372.94px;font:11px/15px 'Liberation Sans',sans-serif;color:#111;white-space:pre;transform:scaleX(0.8812);transform-origin:0 0;">UN</div>
<div style="position:absolute;left:576.30px;top:372.94px;font:11px/15px 'Liberation Sans',sans-serif;color:#111;white-space:pre;transform:scaleX(1.0225);transform-origin:0 0;">1,0000</div>
<div style="position:absolute;left:687.50px;top:372.94px;font:11px/15px 'Liberation Sans',sans-serif;color:#111;white-space:pre;transform:scaleX(0.9400);transform-origin:0 0;">20</div>
<div style="position:absolute;left:727.50px;top:372.94px;font:11px/15px 'Liberation Sans',sans-serif;color:#111;white-space:pre;transform:scaleX(0.9727);transform-origin:0 0;">R$ 1</div>
<svg style="position:absolute;left:33px;top:374px" width="8" height="11" viewBox="0 0 8 11"><path d="M0.8 0.3 L6.6 5.4 L0.8 10.5 Z" fill="#000"/></svg>
<div style="position:absolute;left:27.60px;top:443.94px;font:11px/15px 'Liberation Sans',sans-serif;color:#000;white-space:pre;transform:scaleX(0.9473);transform-origin:0 0;">Base ICMS</div>
<div style="position:absolute;left:135.10px;top:443.94px;font:11px/15px 'Liberation Sans',sans-serif;color:#000;white-space:pre;transform:scaleX(0.9673);transform-origin:0 0;">Valor do ICMS</div>
<div style="position:absolute;left:241.90px;top:443.94px;font:11px/15px 'Liberation Sans',sans-serif;color:#000;white-space:pre;transform:scaleX(0.9725);transform-origin:0 0;">Base ICMS Subst.</div>
<div style="position:absolute;left:349.30px;top:443.94px;font:11px/15px 'Liberation Sans',sans-serif;color:#000;white-space:pre;transform:scaleX(0.9815);transform-origin:0 0;">Valor ICMS Subst.</div>
<div style="position:absolute;left:456.90px;top:443.94px;font:bold 11px/15px 'Liberation Sans',sans-serif;color:#000;white-space:pre;transform:scaleX(1.1622);transform-origin:0 0;">Valor Total Itens</div>
<div style="position:absolute;left:563.30px;top:442.94px;font:11px/15px 'Liberation Sans',sans-serif;color:#000;white-space:pre;transform:scaleX(1.0179);transform-origin:0 0;">Desconto</div>
<div style="position:absolute;left:671.30px;top:442.94px;font:11px/15px 'Liberation Sans',sans-serif;color:#000;white-space:pre;transform:scaleX(1.0320);transform-origin:0 0;">Valor Total do IPI</div>
<svg style="position:absolute;left:27px;top:457px;" width="107" height="25" viewBox="27 457 107 25"><rect x="29.47" y="459.38" width="102.55" height="20.55" rx="0" fill="#d7e4f2" stroke="#6f7378" stroke-width="1.15" /></svg>
<div style="position:absolute;left:98.19px;top:461.82px;font:11px/15px 'Liberation Mono',monospace;color:#4a4a4a;white-space:pre;transform:scaleX(1.0909);transform-origin:0 0;">0,00</div>
<svg style="position:absolute;left:134px;top:457px;" width="107" height="25" viewBox="134 457 107 25"><rect x="136.38" y="459.38" width="102.45" height="20.55" rx="0" fill="#d7e4f2" stroke="#6f7378" stroke-width="1.15" /></svg>
<div style="position:absolute;left:204.99px;top:461.82px;font:11px/15px 'Liberation Mono',monospace;color:#4a4a4a;white-space:pre;transform:scaleX(1.0909);transform-origin:0 0;">0,00</div>
<svg style="position:absolute;left:242px;top:457px;" width="106" height="25" viewBox="242 457 106 25"><rect x="243.57" y="459.38" width="102.35" height="20.55" rx="0" fill="#d7e4f2" stroke="#6f7378" stroke-width="1.15" /></svg>
<div style="position:absolute;left:312.09px;top:461.82px;font:11px/15px 'Liberation Mono',monospace;color:#4a4a4a;white-space:pre;transform:scaleX(1.0909);transform-origin:0 0;">0,00</div>
<svg style="position:absolute;left:349px;top:457px;" width="106" height="25" viewBox="349 457 106 25"><rect x="350.97" y="459.38" width="102.05" height="20.55" rx="0" fill="#d7e4f2" stroke="#6f7378" stroke-width="1.15" /></svg>
<div style="position:absolute;left:419.19px;top:461.82px;font:11px/15px 'Liberation Mono',monospace;color:#4a4a4a;white-space:pre;transform:scaleX(1.0909);transform-origin:0 0;">0,00</div>
<svg style="position:absolute;left:456px;top:457px;" width="106" height="25" viewBox="456 457 106 25"><rect x="458.18" y="459.38" width="102.25" height="20.55" rx="0" fill="#d7e4f2" stroke="#6f7378" stroke-width="1.15" /></svg>
<div style="position:absolute;left:512.19px;top:461.82px;font:bold 11px/15px 'Liberation Mono',monospace;color:#484848;white-space:pre;transform:scaleX(1.0909);transform-origin:0 0;">122,20</div>
<svg style="position:absolute;left:564px;top:457px;" width="105" height="24" viewBox="564 457 105 24"><rect x="565.58" y="458.68" width="101.75" height="20.15" rx="0" fill="#d7e4f2" stroke="#6f7378" stroke-width="1.15" /></svg>
<div style="position:absolute;left:633.89px;top:461.82px;font:11px/15px 'Liberation Mono',monospace;color:#4a4a4a;white-space:pre;transform:scaleX(1.0909);transform-origin:0 0;">0,00</div>
<svg style="position:absolute;left:672px;top:454px;" width="106" height="24" viewBox="672 454 106 24"><rect x="673.88" y="456.27" width="101.75" height="20.15" rx="0" fill="#d7e4f2" stroke="#6f7378" stroke-width="1.15" /></svg>
<div style="position:absolute;left:742.19px;top:459.82px;font:11px/15px 'Liberation Mono',monospace;color:#4a4a4a;white-space:pre;transform:scaleX(1.0909);transform-origin:0 0;">0,00</div>
<div style="position:absolute;left:27.60px;top:483.94px;font:11px/15px 'Liberation Sans',sans-serif;color:#000;white-space:pre;transform:scaleX(1.0400);transform-origin:0 0;">Frete</div>
<div style="position:absolute;left:135.10px;top:483.94px;font:11px/15px 'Liberation Sans',sans-serif;color:#000;white-space:pre;transform:scaleX(0.9755);transform-origin:0 0;">Seguro</div>
<div style="position:absolute;left:241.90px;top:483.94px;font:11px/15px 'Liberation Sans',sans-serif;color:#000;white-space:pre;transform:scaleX(0.8507);transform-origin:0 0;">Pis</div>
<div style="position:absolute;left:349.20px;top:483.94px;font:11px/15px 'Liberation Sans',sans-serif;color:#000;white-space:pre;transform:scaleX(0.9457);transform-origin:0 0;">COFINS</div>
<div style="position:absolute;left:456.90px;top:483.94px;font:11px/15px 'Liberation Sans',sans-serif;color:#000;white-space:pre;transform:scaleX(1.0257);transform-origin:0 0;">Out. Desp. Acess.</div>
<div style="position:absolute;left:671.60px;top:483.94px;font:bold 11px/15px 'Liberation Sans',sans-serif;color:#000;white-space:pre;transform:scaleX(1.1228);transform-origin:0 0;">Valor Total Nota</div>
<svg style="position:absolute;left:27px;top:498px;" width="107" height="25" viewBox="27 498 107 25"><rect x="29.47" y="499.88" width="102.55" height="20.75" rx="0" fill="#d7e4f2" stroke="#6f7378" stroke-width="1.15" /></svg>
<div style="position:absolute;left:98.19px;top:502.82px;font:11px/15px 'Liberation Mono',monospace;color:#4a4a4a;white-space:pre;transform:scaleX(1.0909);transform-origin:0 0;">0,00</div>
<svg style="position:absolute;left:134px;top:498px;" width="107" height="25" viewBox="134 498 107 25"><rect x="136.38" y="499.88" width="102.45" height="20.75" rx="0" fill="#d7e4f2" stroke="#6f7378" stroke-width="1.15" /></svg>
<div style="position:absolute;left:204.99px;top:502.82px;font:11px/15px 'Liberation Mono',monospace;color:#4a4a4a;white-space:pre;transform:scaleX(1.0909);transform-origin:0 0;">0,00</div>
<svg style="position:absolute;left:242px;top:498px;" width="106" height="25" viewBox="242 498 106 25"><rect x="243.57" y="499.88" width="102.35" height="20.75" rx="0" fill="#d7e4f2" stroke="#6f7378" stroke-width="1.15" /></svg>
<div style="position:absolute;left:312.09px;top:502.82px;font:11px/15px 'Liberation Mono',monospace;color:#4a4a4a;white-space:pre;transform:scaleX(1.0909);transform-origin:0 0;">0,00</div>
<svg style="position:absolute;left:349px;top:498px;" width="106" height="25" viewBox="349 498 106 25"><rect x="350.97" y="499.88" width="102.05" height="20.75" rx="0" fill="#d7e4f2" stroke="#6f7378" stroke-width="1.15" /></svg>
<div style="position:absolute;left:419.19px;top:502.82px;font:11px/15px 'Liberation Mono',monospace;color:#4a4a4a;white-space:pre;transform:scaleX(1.0909);transform-origin:0 0;">0,00</div>
<svg style="position:absolute;left:456px;top:498px;" width="106" height="25" viewBox="456 498 106 25"><rect x="458.18" y="499.88" width="102.25" height="20.75" rx="0" fill="#d7e4f2" stroke="#6f7378" stroke-width="1.15" /></svg>
<div style="position:absolute;left:526.59px;top:502.82px;font:11px/15px 'Liberation Mono',monospace;color:#4a4a4a;white-space:pre;transform:scaleX(1.0909);transform-origin:0 0;">0,00</div>
<svg style="position:absolute;left:671px;top:498px;" width="106" height="24" viewBox="671 498 106 24"><rect x="673.18" y="499.97" width="101.85" height="20.25" rx="0" fill="#d7e4f2" stroke="#6f7378" stroke-width="1.15" /></svg>
<div style="position:absolute;left:726.29px;top:502.82px;font:bold 11px/15px 'Liberation Mono',monospace;color:#484848;white-space:pre;transform:scaleX(1.0909);transform-origin:0 0;">112,43</div>
<svg style="position:absolute;left:19px;top:276px;" width="764" height="161" viewBox="19 276 764 161"><rect x="22.30" y="279.30" width="757.90" height="154.60" rx="1" fill="none" stroke="#f40b0e" stroke-width="3.6" /></svg>
<svg style="position:absolute;left:648px;top:479px;" width="144" height="56" viewBox="648 479 144 56"><rect x="651.55" y="481.95" width="137.60" height="49.70" rx="1.5" fill="none" stroke="#f40b0e" stroke-width="3.7" /></svg>
<div style="position:absolute;left:11.00px;top:557.80px;width:780.00px;height:44.50px;background:linear-gradient(#1c4574,#275a9e 45%,#3a7ad2)"></div>
<div style="position:absolute;left:11.00px;top:602.20px;width:780.00px;height:20.60px;background:#f0f0f0"></div>
<div style="position:absolute;left:666.50px;top:603.00px;width:1.00px;height:19.00px;background:#d4d4d4"></div>
<div style="position:absolute;left:667.50px;top:603.00px;width:1.00px;height:19.00px;background:#fbfbfb"></div>
<div style="position:absolute;left:673.70px;top:606.09px;font:12px/16px 'Liberation Sans',sans-serif;color:#111;white-space:pre;transform:scaleX(1.0435);transform-origin:0 0;">F12 - Me</div>
<div style="position:absolute;left:349.90px;top:588.94px;font:bold 11px/15px 'Liberation Sans',sans-serif;color:#ced3da;white-space:pre;transform:scaleX(1.1383);transform-origin:0 0;text-shadow:-0.8px 0.6px 0 rgba(255,255,255,.85),1px 1px 1.5px rgba(0,0,0,.45)">Incluir [F3]</div>
<div style="position:absolute;left:439.60px;top:588.94px;font:bold 11px/15px 'Liberation Sans',sans-serif;color:#ced3da;white-space:pre;transform:scaleX(1.0834);transform-origin:0 0;text-shadow:-0.8px 0.6px 0 rgba(255,255,255,.85),1px 1px 1.5px rgba(0,0,0,.45)">Excluir [F4]</div>
<div style="position:absolute;left:528.70px;top:588.94px;font:bold 11px/15px 'Liberation Sans',sans-serif;color:#ced3da;white-space:pre;transform:scaleX(1.1485);transform-origin:0 0;text-shadow:-0.8px 0.6px 0 rgba(255,255,255,.85),1px 1px 1.5px rgba(0,0,0,.45)">Salvar [F5]</div>
<div style="position:absolute;left:612.50px;top:588.94px;font:bold 11px/15px 'Liberation Sans',sans-serif;color:#ced3da;white-space:pre;transform:scaleX(1.1049);transform-origin:0 0;text-shadow:-0.8px 0.6px 0 rgba(255,255,255,.85),1px 1px 1.5px rgba(0,0,0,.45)">Cancelar [F6]</div>
<div style="position:absolute;left:706.30px;top:588.94px;font:bold 11px/15px 'Liberation Sans',sans-serif;color:#f4f6f9;white-space:pre;transform:scaleX(1.1400);transform-origin:0 0;text-shadow:-0.8px 0.6px 0 rgba(255,255,255,.85),1px 1px 1.5px rgba(0,0,0,.45)">Fe</div>
<svg style="position:absolute;left:370px;top:560px" width="28" height="28" viewBox="370 560 28 28"><defs><linearGradient id="gd" x1="0" y1="0" x2="1" y2="1"><stop offset="0" stop-color="#e6e6e6"/><stop offset="1" stop-color="#cdcdcd"/></linearGradient><linearGradient id="gc" x1="0" y1="0" x2="0" y2="1"><stop offset="0" stop-color="#3e3e3e"/><stop offset="1" stop-color="#8c8c8c"/></linearGradient></defs><rect x="373.2" y="562.8" width="17.8" height="22.2" fill="url(#gd)"/><circle cx="387" cy="578.8" r="6.8" fill="url(#gc)"/><path d="M382.8 578.8 H391.2 M387 574.6 V583" stroke="#f4f4f4" stroke-width="2.7"/></svg>
<svg style="position:absolute;left:460px;top:558px" width="24" height="28" viewBox="460 558 24 28"><defs><linearGradient id="gt" x1="0" y1="0" x2="1" y2="0"><stop offset="0" stop-color="#979ba0"/><stop offset=".45" stop-color="#bcbfc3"/><stop offset="1" stop-color="#9a9ea3"/></linearGradient><linearGradient id="gt2" x1="0" y1="0" x2="0" y2="1"><stop offset="0" stop-color="#fff" stop-opacity="0"/><stop offset=".6" stop-color="#fff" stop-opacity="0"/><stop offset="1" stop-color="#fff" stop-opacity=".4"/></linearGradient></defs><path d="M463.8 564.6 L479.6 564.6 L477.9 580 Q471.7 583.6 465.5 580 Z" fill="url(#gt)"/><path d="M463.8 564.6 L479.6 564.6 L477.9 580 Q471.7 583.6 465.5 580 Z" fill="url(#gt2)"/><ellipse cx="471.7" cy="564.3" rx="8.1" ry="2.9" fill="#d6d8db"/><ellipse cx="471.7" cy="564.5" rx="6.5" ry="1.7" fill="#7b7f85"/><path d="M468.2 569 L468.8 579.6 M471.7 569.5 V580.8 M475.2 569 L474.6 579.6" stroke="#c6c9cc" stroke-width=".7" opacity=".6"/></svg>
<svg style="position:absolute;left:548px;top:561px" width="26" height="26" viewBox="548 561 26 26"><rect x="550.5" y="563" width="21.5" height="21.6" rx="2.6" fill="#c6c8cb"/><rect x="553.6" y="564.2" width="15.4" height="9.6" fill="#e3e4e6"/><rect x="556.2" y="577.4" width="11" height="7.2" fill="#a4a7ab"/><rect x="560.2" y="578.6" width="5.8" height="6" fill="#f2f2f2"/><rect x="557.6" y="579.4" width="1.6" height="4" fill="#3c3e42"/></svg>
<svg style="position:absolute;left:637px;top:561px" width="26" height="26" viewBox="637 561 26 26"><path d="M641.4 566 L658 582.2 M658 566 L641.4 582.2" stroke="#8e9398" stroke-width="3.4" stroke-linecap="round"/><path d="M641.6 565.6 L657.8 581.6 M657.8 565.6 L641.6 581.6" stroke="#bfc3c8" stroke-width="1.5" stroke-linecap="round"/></svg>
<div style="position:absolute;left:790.00px;top:535.00px;width:1.30px;height:14.50px;background:#16365c"></div>
<div style="position:absolute;left:719.00px;top:549.50px;width:90.00px;height:95.00px;background:linear-gradient(135deg,#eceff4,#e6ebf1);border-radius:8px 0 0 0;box-shadow:0 0 1.5px rgba(0,0,0,.3)"></div>
<svg style="position:absolute;left:735px;top:565px" width="19" height="19" viewBox="735 565 19 19"><rect x="736" y="566" width="16.5" height="16.8" rx=".8" fill="#117d11"/><circle cx="744.25" cy="574.5" r="6.8" fill="#fff"/><path d="M744.25 571.6 Q746 569.6 748.2 569.2 Q746.2 567.9 744.25 568.9 Q742.3 567.9 740.3 569.2 Q742.5 569.6 744.25 571.6 Z" fill="#117d11"/><path d="M744.25 573.6 Q747.4 576.4 748.6 579.8 Q746.6 581.4 744.25 581.4 Q741.9 581.4 739.9 579.8 Q741.1 576.4 744.25 573.6 Z" fill="#117d11" opacity="0"/><path d="M744.25 573.2 Q741 576 739.6 580 M744.25 573.2 Q747.5 576 748.9 580" stroke="#117d11" stroke-width="1.3" fill="none"/></svg>
<svg style="position:absolute;left:778px;top:568px" width="15" height="15" viewBox="778 568 15 15"><rect x="779.3" y="569.5" width="11.7" height="11.5" rx="2.2" fill="#0a0a0a"/><rect x="781.2" y="571.2" width="8.6" height="8.2" rx=".8" fill="#0a8a0a"/><rect x="781.4" y="571.4" width="6.8" height="6.6" fill="#12e612"/></svg>
<svg style="position:absolute;left:735px;top:606px" width="19" height="21" viewBox="735 606 19 21"><defs><linearGradient id="gs" x1="0" y1="0" x2="0" y2="1"><stop offset="0" stop-color="#1d63c4"/><stop offset="1" stop-color="#3d8ee8"/></linearGradient></defs><path d="M744.5 608.2 Q747.6 610 751.6 610 Q752.2 619.4 744.5 624.8 Q736.8 619.4 737.4 610 Q741.4 610 744.5 608.2 Z" fill="url(#gs)" stroke="#c8dcf4" stroke-width="1.3"/><path d="M741 616.2 L743.7 618.9 L748.4 613.3" stroke="#fff" stroke-width="1.9" fill="none" stroke-linecap="round" stroke-linejoin="round"/></svg>
<svg style="position:absolute;left:777px;top:606px" width="17" height="21" viewBox="777 606 17 21"><path d="M786 617 L792.4 622.8 L783 621.6 Z" fill="#f9a21c"/><path d="M791.6 607.8 L781 614.2 L785 616 L778.6 624.8 L789 616.6 L786.2 614.4 Z" fill="#f2341f"/></svg>
</div></body></html>
